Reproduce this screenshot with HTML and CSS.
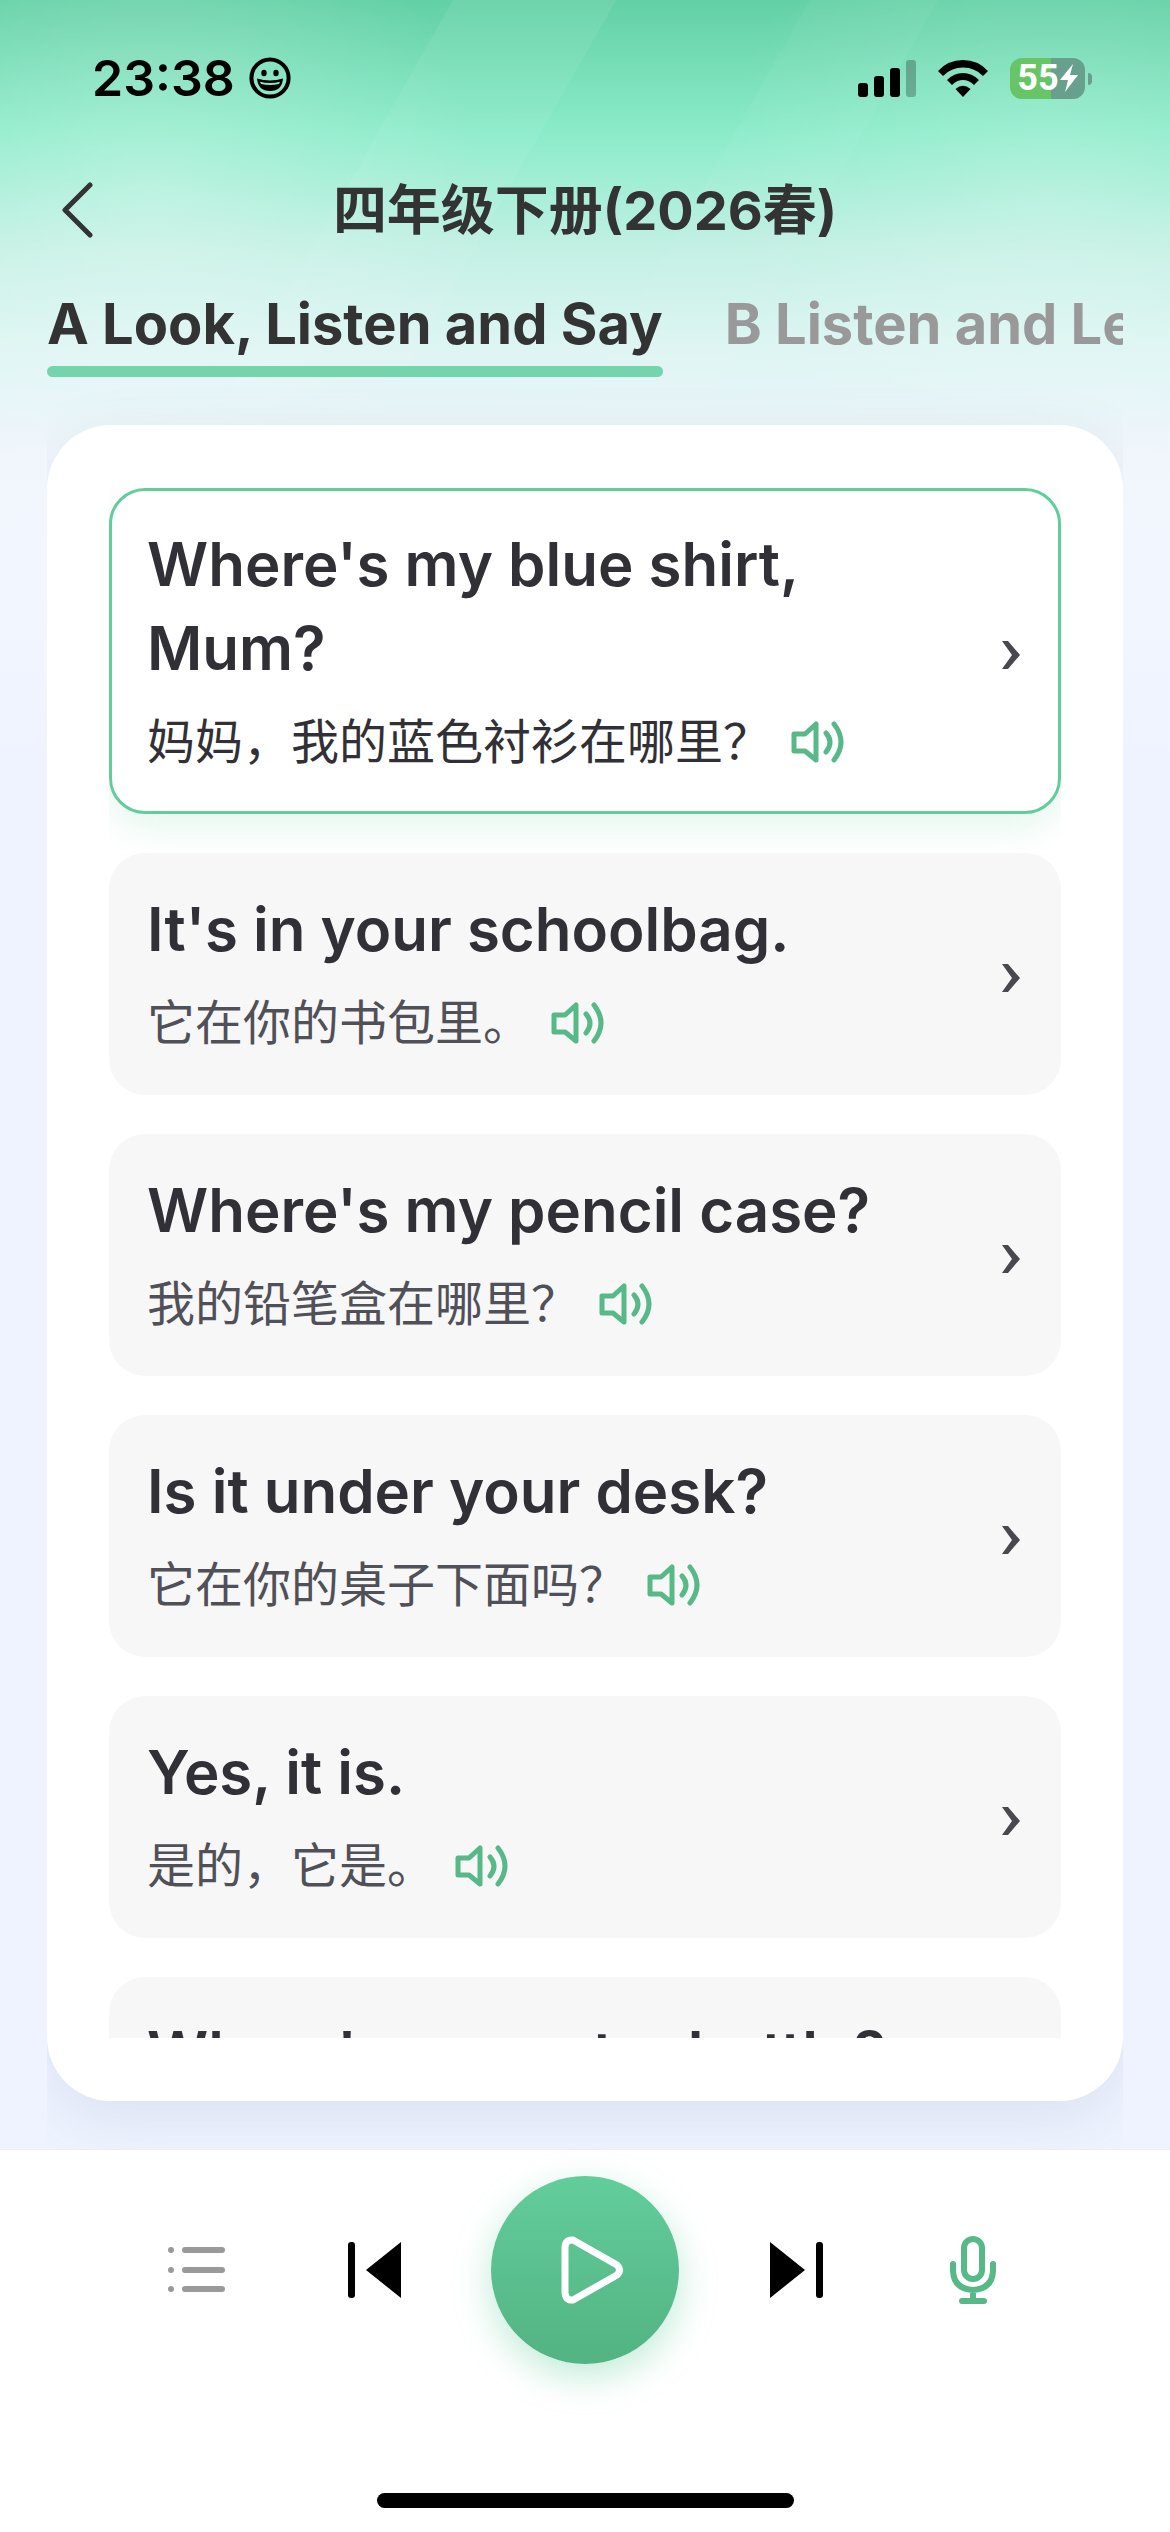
FILE: index.html
```html
<!doctype html>
<html lang="zh">
<head>
	<meta charset="UTF-8">
	<meta name="viewport" content="width=device-width, initial-scale=1.0">
	<title>四年级下册(2026春)</title>
	<link rel="stylesheet" href="styles.css">
</head>
<body>
<svg class="sprite" aria-hidden="true">
	<symbol id="speaker" viewBox="0 0 54 42">
		<path d="M3 13h11L25 3v36L14 30H3z"/>
		<path d="M35 12q8 9 0 19M43 3q14 18 0 36"/>
	</symbol>
	<symbol id="arrow" viewBox="0 0 18 28">
		<path d="M0 0h6l12 14L6 28H0l10-14z"/>
	</symbol>
</svg>
<svg class="rays" viewBox="0 0 1170 460" preserveAspectRatio="none" aria-hidden="true">
	<defs>
		<linearGradient id="ray" x1="0" y1="0" x2="0" y2="1">
			<stop offset="0" stop-color="#fff" stop-opacity=".07"/>
			<stop offset="1" stop-color="#fff" stop-opacity=".02"/>
		</linearGradient>
		<linearGradient id="ray2" x1="0" y1="0" x2="0" y2="1">
			<stop offset="0" stop-color="#fff" stop-opacity=".04"/>
			<stop offset="1" stop-color="#fff" stop-opacity=".02"/>
		</linearGradient>
	</defs>
	<path fill="url(#ray)" d="M453 0h163L366 440H204z"/>
	<path fill="url(#ray2)" d="M810 0h128L688 440H560z"/>
</svg>
<div class="status">
	<div class="side">
		<span class="time">23:38</span>
		<svg width="42" height="42" viewBox="0 0 42 42">
			<circle cx="21" cy="21" r="18.6" fill="none" stroke="#000" stroke-width="4"/>
			<ellipse cx="15" cy="16" rx="2.7" ry="3.3"/>
			<ellipse cx="27" cy="16" rx="2.7" ry="3.3"/>
			<path fill-rule="evenodd" d="M8 21.5q13 4 26 0Q33 34 21 34T8 21.5zm3 3.200q10 2.600 20 0l-1 2.300q-9 2.200-18 0z"/>
		</svg>
	</div>
	<div class="side">
		<svg width="58" height="37" viewBox="0 0 58 37">
			<rect y="23" width="10" height="14" rx="3"/>
			<rect x="16" y="16" width="10" height="21" rx="3"/>
			<rect x="32" y="8" width="10" height="29" rx="3"/>
			<rect x="48" width="10" height="37" rx="3" opacity=".25"/>
		</svg>
		<svg class="wifi" width="50" height="37" viewBox="0 0 50 37">
			<path d="M0 11Q10 0 25 0t25 11l-5 5Q37 7.500 25 7.500T5 16z"/>
			<path d="M9 20q7-7 16-7t16 7l-5 5q-5-5-11-5t-11 5z"/>
			<path d="M17.500 29q7.500-6.500 15 0L25 37z"/>
		</svg>
		<div class="battery">
			<span>55</span>
			<svg width="18" height="28" viewBox="0 0 18 28"><path fill="#fff" d="M13 0 0 16h8L5 28 18 11h-8z"/></svg>
		</div>
	</div>
</div>
<header class="nav">
	<button class="back" aria-label="返回">
		<svg width="34" height="56" viewBox="0 0 34 56"><path d="M30 3 5 28l25 25"/></svg>
	</button>
	<h1>四年级下册(2026春)</h1>
</header>
<nav class="tabs">
	<button class="tab on">A Look, Listen and Say</button>
	<button class="tab">B Listen and Learn</button>
</nav>
<main class="page">
	<div class="card">
		<ul class="list">
			<li class="item on">
				<div class="text">
					<p class="en">Where's my blue shirt, Mum?</p>
					<p class="cn">妈妈，我的蓝色衬衫在哪里？<button class="play-one" aria-label="播放"><svg><use href="#speaker"/></svg></button></p>
				</div>
				<svg class="arrow"><use href="#arrow"/></svg>
			</li>
			<li class="item">
				<div class="text">
					<p class="en">It's in your schoolbag.</p>
					<p class="cn">它在你的书包里。<button class="play-one" aria-label="播放"><svg><use href="#speaker"/></svg></button></p>
				</div>
				<svg class="arrow"><use href="#arrow"/></svg>
			</li>
			<li class="item">
				<div class="text">
					<p class="en">Where's my pencil case?</p>
					<p class="cn">我的铅笔盒在哪里？<button class="play-one" aria-label="播放"><svg><use href="#speaker"/></svg></button></p>
				</div>
				<svg class="arrow"><use href="#arrow"/></svg>
			</li>
			<li class="item">
				<div class="text">
					<p class="en">Is it under your desk?</p>
					<p class="cn">它在你的桌子下面吗？<button class="play-one" aria-label="播放"><svg><use href="#speaker"/></svg></button></p>
				</div>
				<svg class="arrow"><use href="#arrow"/></svg>
			</li>
			<li class="item">
				<div class="text">
					<p class="en">Yes, it is.</p>
					<p class="cn">是的，它是。<button class="play-one" aria-label="播放"><svg><use href="#speaker"/></svg></button></p>
				</div>
				<svg class="arrow"><use href="#arrow"/></svg>
			</li>
			<li class="item">
				<div class="text">
					<p class="en">Where's my water bottle?</p>
				</div>
			</li>
		</ul>
	</div>
</main>
<footer class="bar">
	<div class="controls">
		<button class="wide" aria-label="列表">
			<svg width="58" height="48" viewBox="0 0 58 48" fill="none" stroke="#999" stroke-width="6" stroke-linecap="round">
				<path d="M3 4h0M3 24h0M3 43h0M17 4h37M17 24h37M17 43h37"/>
			</svg>
		</button>
		<button class="step" aria-label="上一句">
			<svg width="54" height="56" viewBox="0 0 54 56"><rect width="7" height="56" rx="3"/><path d="M53 0v56L18 28z"/></svg>
		</button>
		<button class="play" aria-label="播放全部">
			<svg width="64" height="68" viewBox="0 0 64 68"><path d="M5 11v46q1 8 8 7l44-25q5-5 0-10L13 4q-7-1-8 7z"/></svg>
		</button>
		<button class="step" aria-label="下一句">
			<svg width="54" height="56" viewBox="0 0 54 56"><path d="M1 0v56l35-28z"/><rect x="47" width="7" height="56" rx="3"/></svg>
		</button>
		<button class="wide" aria-label="录音">
			<svg width="46" height="68" viewBox="0 0 46 68" fill="none" stroke="#56b987" stroke-width="6" stroke-linecap="round">
				<rect x="14" y="3" width="18" height="40" rx="9"/>
				<path d="M3 28v7q1 18 20 19 19-1 20-19v-7M23 54v11M12 65h22"/>
			</svg>
		</button>
	</div>
	<div class="home"></div>
</footer>
</body>
</html>
```
FILE: styles.css
```css
* {
	box-sizing: border-box;
	margin: 0;
	padding: 0;
}
body {
	position: relative;
	display: flex;
	flex-direction: column;
	height: 100vh;
	overflow: hidden;
	font-family: Inter, "Noto Sans CJK SC", sans-serif;
	color: #303036;
	background:
		radial-gradient(330px 330px at 150px 190px, rgba(255,255,255,.26), rgba(255,255,255,0)),
		radial-gradient(330px 330px at 1050px 190px, rgba(255,255,255,.2), rgba(255,255,255,0)),
		linear-gradient(#63d0a5 0, #8aebc9 130px, #9aedd1 165px, #c3f0e4 250px, #dcf5f2 340px, #e6f5f8 400px, #f1f6fc 460px, #f2f7ff 540px, #eef3ff 760px);
}
button {
	border: 0;
	background: none;
	font: inherit;
	color: inherit;
	cursor: pointer;
}
svg {
	display: block;
	flex: none;
}
.sprite {
	position: absolute;
	width: 0;
	height: 0;
}
.rays {
	position: absolute;
	top: 0;
	left: 0;
	width: 100%;
	height: 460px;
	z-index: -1;
}

.status {
	display: flex;
	justify-content: space-between;
	align-items: center;
	height: 156px;
	padding: 0 78px 0 92px;
}
.side {
	display: flex;
	align-items: center;
	gap: 14px;
	color: #000;
}
.time {
	font-size: 50px;
	font-weight: 600;
}
.wifi {
	margin: 0 8px;
}
.battery {
	position: relative;
	display: flex;
	justify-content: center;
	align-items: center;
	gap: 1px;
	width: 75px;
	height: 41px;
	margin-right: 7px;
	border-radius: 12px;
	background: linear-gradient(90deg, #67c566 55%, #67a18d 55%);
	color: #fff;
	font-family: Roboto, sans-serif;
	font-size: 36px;
	font-weight: 700;
}
.battery::after {
	content: "";
	position: absolute;
	right: -7px;
	top: 15px;
	width: 4px;
	height: 12px;
	border-radius: 0 4px 4px 0;
	background: #67a18d;
}

.nav {
	display: flex;
	align-items: center;
	height: 108px;
	padding: 0 60px;
	color: #333;
}
.nav h1 {
	flex: 1;
	margin-right: 34px;
	padding-bottom: 8px;
	font-size: 54px;
	font-weight: 700;
	text-align: center;
}
.back path {
	fill: none;
	stroke: #333;
	stroke-width: 5;
	stroke-linecap: round;
	stroke-linejoin: round;
}

.tabs {
	display: flex;
	gap: 62px;
	margin: 0 47px;
	padding-top: 18px;
	overflow: hidden;
}
.tab {
	flex: none;
	font-size: 56px;
	line-height: 84px;
	font-weight: 700;
	color: #999;
}
.tab::after {
	content: "";
	display: block;
	height: 11px;
	border-radius: 6px;
}
.tab.on {
	color: #333;
}
.tab.on::after {
	background: #74d5ad;
}

.page {
	flex: 1;
	min-height: 0;
	margin: 0 47px;
	padding: 48px 0;
	overflow: hidden;
}
.card {
	height: 100%;
	padding: 63px 62px;
	border-radius: 64px;
	background: #fff;
	box-shadow: 0 16px 60px rgba(80,110,120,.12);
}
.list {
	display: flex;
	flex-direction: column;
	gap: 39px;
	height: 100%;
	overflow: hidden;
	list-style: none;
}
.item {
	flex: none;
	display: flex;
	align-items: center;
	justify-content: space-between;
	padding: 31px 38px 35px 35px;
	border: 3px solid transparent;
	border-radius: 36px;
	background: #f7f7f7;
}
.item.on {
	border-color: #62cd9b;
	background: #fff;
	box-shadow: 0 12px 36px rgba(98,205,155,.18);
}
.text {
	max-width: 800px;
}
.en {
	font-size: 60px;
	line-height: 84px;
	font-weight: 600;
}
.cn {
	display: flex;
	align-items: center;
	gap: 20px;
	margin-top: 18px;
	font-size: 48px;
	line-height: 68px;
	color: #505058;
}
.on .cn {
	color: #303036;
}
.play-one svg {
	width: 54px;
	height: 42px;
	fill: none;
	stroke: #56b987;
	stroke-width: 5;
	stroke-linecap: round;
	stroke-linejoin: round;
}
.arrow {
	width: 18px;
	height: 28px;
	margin-top: 12px;
	fill: #48484e;
}

.bar {
	display: flex;
	flex-direction: column;
	justify-content: space-between;
	align-items: center;
	height: 383px;
	padding: 26px 136px 24px;
	border-top: 1px solid #eee;
	background: #fff;
}
.controls {
	display: flex;
	justify-content: space-between;
	align-items: center;
	width: 100%;
}
.controls button {
	display: flex;
	justify-content: center;
}
.wide {
	width: 122px;
}
.step {
	width: 72px;
}
.controls .play {
	align-items: center;
	width: 188px;
	height: 188px;
	padding-left: 14px;
	border-radius: 50%;
	background: linear-gradient(#62cd9b, #53b382);
	box-shadow: 0 12px 36px rgba(98,205,155,.4);
}
.play path {
	fill: none;
	stroke: #fff;
	stroke-width: 7;
	stroke-linejoin: round;
}
.home {
	width: 417px;
	height: 15px;
	border-radius: 8px;
	background: #000;
}
```
